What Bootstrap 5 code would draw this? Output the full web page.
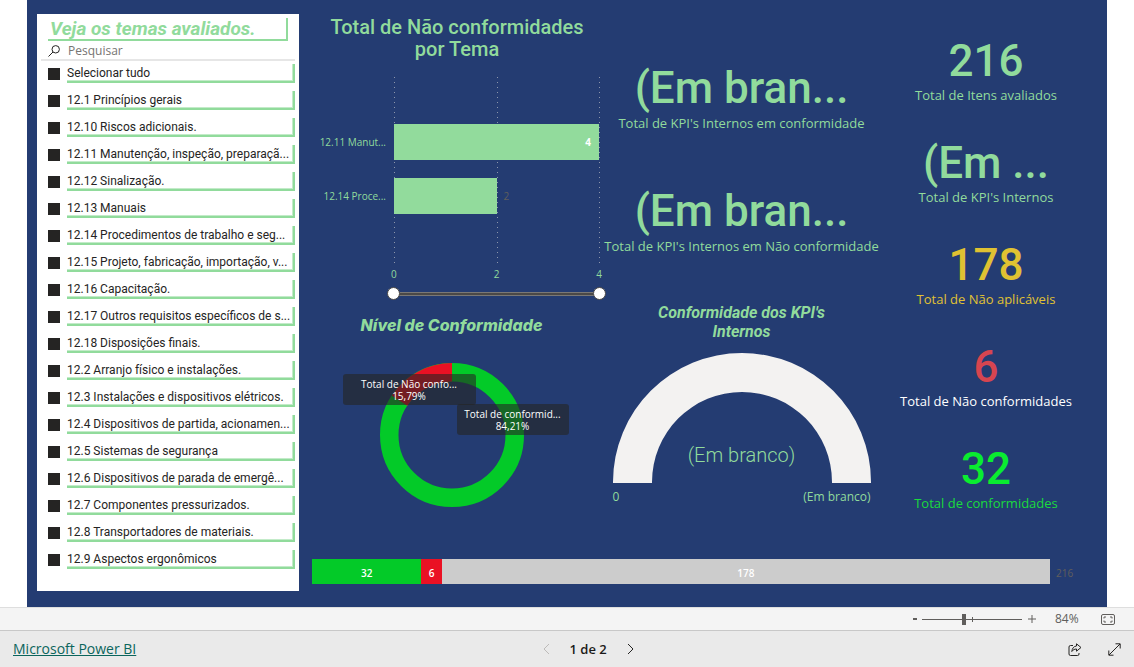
<!DOCTYPE html>
<html lang="pt-BR">
<head>
<meta charset="utf-8">
<meta name="viewport" content="width=device-width, initial-scale=1">
<title>Total de Não conformidades</title>
<link href="https://cdn.jsdelivr.net/npm/bootstrap@5.3.0/dist/css/bootstrap.min.css" rel="stylesheet">
<style>
:root{--mint:#91db9c;--navy:#243c72;--ok:#03ca28;--bad:#ea1124}
body{font-family:"Open Sans","Noto Sans",sans-serif;font-size:12px;line-height:20px;color:#252423;background:#fff}
.din{font-family:Roboto,"Liberation Sans",sans-serif;font-weight:500}
.text-mint{color:var(--mint)}
.report{background:var(--navy);margin:0 27px;padding:14px 0 16px 10px}
/* slicer */
.slicer{width:262px;padding:4px 4px 21px}
.slicer-title{font-size:19px;line-height:21px;font-style:italic;font-weight:700;color:var(--mint);margin:0 7px 0 7px;padding-left:2px;border:solid var(--mint);border-width:0 2px 2px 0;height:23px}
.search{height:20px;border-bottom:2px solid #e6e6e6;margin-bottom:3px;padding:2px 0 0 7px}
.search input{font-size:12px;line-height:16px;color:#605e5c;outline:0}
.search input::placeholder{color:#767472;opacity:1}
.opts{display:grid;grid-template-columns:minmax(0,1fr);gap:8px;padding-left:7px}
.opt{height:19px}
.opt input{appearance:none;width:12px;height:12px;background:#252423;margin:0 7px 0 0;flex:none}
.opt label{font-family:Roboto,"Open Sans",sans-serif;font-size:12px;height:19px;line-height:18px;border:solid var(--mint);border-width:0 2px 2px 0;box-shadow:inset -1px -1px #c3ebc9;white-space:nowrap;overflow:hidden}
/* visuals */
.board{display:grid;grid-template-columns:305fr 275fr 214fr;padding-right:14px}
.chart-title{font-size:20px;line-height:22px;padding:2px 0 0 11px;margin:0 0 17px}
.plot{height:189px;margin:0 5px 0 95px;padding-top:47px;position:relative}
.gridline{position:absolute;top:0;bottom:0;width:1px;background:repeating-linear-gradient(#8d96ac 0 1px,transparent 1px 5px)}
.bar-row{height:36px;margin-bottom:18px;position:relative}
.bar-name{position:absolute;right:100%;margin-right:8px;font-size:10px;white-space:nowrap;color:var(--mint)}
.bar-fill{height:36px;background:#92db9c;font-size:10px;position:relative}
.bar-out{font-size:10px;color:#605e5c;margin-left:7px}
.axis{margin:0 2px 0 92px;font-size:10px;line-height:16px;color:var(--mint)}
.span-slider{position:relative;height:13px;margin:5px -2px 15px 88px}
.span-slider::before{content:"";position:absolute;left:10px;right:10px;top:5px;height:4px;background:#4b4947;border:solid #7a7876;border-width:1px 0}
.span-slider input{position:absolute;inset:0;width:100%;height:13px;margin:0;appearance:none;background:none;pointer-events:none}
.span-slider input::-webkit-slider-thumb{appearance:none;width:13px;height:13px;border-radius:50%;background:#fff;border:1px solid #4b4947;pointer-events:auto}
.donut-title{font-family:Inter,"Liberation Sans",sans-serif;font-weight:800;font-style:italic;font-size:16px;line-height:20px;margin:0 0 28px}
.donut{width:144px;position:relative}
.tag{position:absolute;background:rgba(37,36,35,.6);border-radius:3px;color:#fff;font-size:10px;line-height:12px;text-align:center;padding:4px 0;white-space:nowrap}
.tag-bad{left:-37px;top:11px;width:133px;height:31px}
.tag-ok{left:77px;top:41px;width:112px;height:31px}
.kpi-mid{padding-top:50px}
.kpi-mid .kpi{margin-bottom:53px}
.kpi-mid .kpi + .kpi{margin-bottom:46px}
.kpi-side{padding-top:23px;display:grid;gap:32px;align-content:start}
.kpi{text-align:center;height:70px;white-space:nowrap}
.kpi-value{font-size:44px;line-height:48px}
.kpi-label{font-size:13px;line-height:22px}
.kpi-side .kpi-label{line-height:20px}
.gauge-title{font-size:16px;line-height:19px;font-style:italic;font-weight:700;margin:0 0 12px}
.gauge{width:258px;position:relative}
.gauge-value{position:absolute;left:0;right:0;top:90px;font-size:20px;line-height:24px;text-align:center}
.amber{color:#e0c232}.rose{color:#d64550}.lime{color:#0aec30}.lime-soft{color:#1adb3d}
.stack{margin:0 31px 7px 13px;font-size:10px;line-height:28px;height:25px}
.stack-bar>span{color:#fff;text-align:center}
.stack-total{width:26px;padding-left:6px;color:#605e5c}
/* bottom bars */
.zoombar{height:23px;background:#f4f4f4;border-top:1px solid #dedede;padding-right:19px;color:#605e5c}
.plain{border:0;background:none;padding:0;color:inherit;line-height:1;display:flex}
.zoom-range{width:100px;height:12px;margin:0 6px 0 4px;appearance:none;background:linear-gradient(#605e5c,#605e5c) center/100% 1px no-repeat,linear-gradient(#605e5c,#605e5c) 50px center/1px 5px no-repeat}
.zoom-range::-webkit-slider-thumb{appearance:none;width:4px;height:11px;background:#605e5c}
.zoom-pct{width:24px;margin:0 22px 0 19px}
.footbar{height:37px;background:#eaeaea;border-top:1px solid #c8c8c8;padding:0 13px}
.brand-link{font-size:14px;color:#0b655c;text-decoration:underline}
.pager{font-size:13px;font-weight:600;color:#1b1a19}
.actions{margin-left:28px;gap:26px}
</style>
</head>
<body class="min-vh-100 d-flex flex-column">
<main class="flex-grow-1 d-flex flex-column">
<div class="report flex-grow-1 d-flex">
  <form class="slicer bg-white flex-shrink-0">
    <h2 class="slicer-title din">Veja os temas avaliados.</h2>
    <div class="search d-flex align-items-center">
      <svg width="12" height="12" viewBox="0 0 12 12" fill="none" stroke="#252423" aria-hidden="true"><circle cx="7.7" cy="4.3" r="3.7"/><path d="M5 7 .5 11.5"/></svg>
      <input type="search" class="border-0 bg-transparent p-0 ms-2 w-75" placeholder="Pesquisar" aria-label="Pesquisar">
    </div>
    <div class="opts" id="opts"></div>
  </form>

  <div class="flex-grow-1 d-flex flex-column justify-content-between">
    <div class="board">
      <section>
        <h2 class="chart-title din text-mint text-center">Total de Não conformidades<br>por Tema</h2>
        <div class="plot">
          <i class="gridline" style="left:0"></i><i class="gridline" style="left:50%"></i><i class="gridline" style="left:100%"></i>
          <div class="bar-row d-flex align-items-center"><span class="bar-name">12.11 Manut...</span><div class="bar-fill d-flex align-items-center justify-content-end text-white fw-bold pe-2" style="width:100%">4</div></div>
          <div class="bar-row d-flex align-items-center"><span class="bar-name">12.14 Proce...</span><div class="bar-fill" style="width:50%"></div><span class="bar-out">2</span></div>
        </div>
        <div class="axis d-flex justify-content-between"><span>0</span><span>2</span><span>4</span></div>
        <div class="span-slider">
          <input type="range" min="0" max="4" value="0" aria-label="Mínimo">
          <input type="range" min="0" max="4" value="4" aria-label="Máximo">
        </div>
        <h2 class="donut-title text-mint text-center">Nível de Conformidade</h2>
        <div class="donut mx-auto">
          <svg class="d-block" width="144" height="144" viewBox="0 0 144 144" fill="none" stroke-width="18.5" role="img" aria-label="Nível de Conformidade">
            <circle cx="72" cy="72" r="62.75" stroke="#03ca28"/>
            <circle cx="72" cy="72" r="62.75" stroke="#ea1124" pathLength="100" stroke-dasharray="15.79 84.21" transform="rotate(-146.84 72 72)"/>
          </svg>
          <div class="tag tag-bad">Total de Não confo...<br>15,79%</div>
          <div class="tag tag-ok">Total de conformid...<br>84,21%</div>
        </div>
      </section>

      <section class="kpi-mid">
        <div class="kpi text-mint"><div class="kpi-value din">(Em bran...</div><div class="kpi-label">Total de KPI's Internos em conformidade</div></div>
        <div class="kpi text-mint"><div class="kpi-value din">(Em bran...</div><div class="kpi-label">Total de KPI's Internos em Não conformidade</div></div>
        <h2 class="gauge-title din text-mint text-center">Conformidade dos KPI's<br>Internos</h2>
        <div class="gauge mx-auto text-mint">
          <svg class="d-block" width="258" height="130" viewBox="0 0 258 130" role="img" aria-label="Conformidade dos KPI's Internos"><path d="M0 130V129A129 129 0 0 1 258 129V130H219V129A90 90 0 0 0 39 129V130Z" fill="#f3f2f1"/></svg>
          <div class="gauge-value din fw-light">(Em branco)</div>
          <div class="d-flex justify-content-between pt-1"><span>0</span><span>(Em branco)</span></div>
        </div>
      </section>

      <section class="kpi-side">
        <div class="kpi text-mint"><div class="kpi-value din">216</div><div class="kpi-label">Total de Itens avaliados</div></div>
        <div class="kpi text-mint"><div class="kpi-value din">(Em ...</div><div class="kpi-label">Total de KPI's Internos</div></div>
        <div class="kpi amber"><div class="kpi-value din">178</div><div class="kpi-label">Total de Não aplicáveis</div></div>
        <div class="kpi"><div class="kpi-value din rose">6</div><div class="kpi-label text-white">Total de Não conformidades</div></div>
        <div class="kpi"><div class="kpi-value din lime">32</div><div class="kpi-label lime-soft">Total de conformidades</div></div>
      </section>
    </div>

    <div class="stack d-flex">
      <div class="stack-bar d-flex flex-grow-1 fw-semibold">
        <span style="width:14.81%;background:#03ca28">32</span><span style="width:2.78%;background:#ea1124">6</span><span style="width:82.41%;background:#ccc">178</span>
      </div>
      <span class="stack-total">216</span>
    </div>
  </div>
</div>
</main>

<div class="zoombar d-flex align-items-center justify-content-end">
  <button class="plain" aria-label="Reduzir"><svg width="5" height="12" viewBox="0 0 5 12"><path d="M0 5h4v2H0z" fill="#605e5c"/></svg></button>
  <input class="zoom-range" type="range" min="0" max="100" value="42" aria-label="Zoom">
  <button class="plain" aria-label="Ampliar"><svg width="8" height="8" viewBox="0 0 8 8" stroke="#605e5c"><path d="M4 0v8M0 4h8"/></svg></button>
  <span class="zoom-pct">84%</span>
  <button class="plain" aria-label="Ajustar à página"><svg width="14" height="11" viewBox="0 0 14 11" fill="none" stroke="#605e5c"><rect x=".5" y=".5" width="13" height="10" rx="1.5"/><path d="M5 3H3v1.500M3 6.500V8h2M9 3h2v1.500M11 6.500V8H9"/></svg></button>
</div>

<footer class="footbar d-flex align-items-center">
  <a class="brand-link" href="#">Microsoft Power BI</a>
  <nav class="pager d-flex align-items-center mx-auto" aria-label="Páginas">
    <button class="plain" aria-label="Anterior" disabled><svg width="7" height="12" viewBox="0 0 7 12" fill="none" stroke="#bdbbb9"><path d="M6 1 1 6l5 5"/></svg></button>
    <span class="mx-3 px-1">1 de 2</span>
    <button class="plain" aria-label="Próxima"><svg width="7" height="12" viewBox="0 0 7 12" fill="none" stroke="#252423"><path d="m1 1 5 5-5 5"/></svg></button>
  </nav>
  <div class="actions d-flex align-items-center">
    <button class="plain" aria-label="Compartilhar"><svg width="14" height="13" viewBox="0 0 14 13" fill="none" stroke="#252423" stroke-linejoin="round"><path d="M5 2.500H2.500A1.500 1.500 0 0 0 1 4v7a1.500 1.500 0 0 0 1.500 1.500h7A1.500 1.500 0 0 0 11 11v-1"/><path d="M8.500.8 13 4.500 8.500 8.200V6C6.500 6 5 6.800 3.800 8.500 4.200 5.500 5.500 3.300 8.500 3z"/></svg></button>
    <button class="plain" aria-label="Tela cheia"><svg width="13" height="13" viewBox="0 0 13 13" fill="none" stroke="#252423"><path d="M1 12 12 1M7.500.8h4.700v4.700M.8 7.500v4.700h4.700"/></svg></button>
  </div>
</footer>
<script src="https://cdn.jsdelivr.net/npm/bootstrap@5.3.0/dist/js/bootstrap.bundle.min.js"></script>
<script>
const temas=["Selecionar tudo","12.1 Princípios gerais","12.10 Riscos adicionais.","12.11 Manutenção, inspeção, preparaçã...","12.12 Sinalização.","12.13 Manuais","12.14 Procedimentos de trabalho e seg...","12.15 Projeto, fabricação, importação, v...","12.16 Capacitação.","12.17 Outros requisitos específicos de s...","12.18 Disposições finais.","12.2 Arranjo físico e instalações.","12.3 Instalações e dispositivos elétricos.","12.4 Dispositivos de partida, acionamen...","12.5 Sistemas de segurança","12.6 Dispositivos de parada de emergê...","12.7 Componentes pressurizados.","12.8 Transportadores de materiais.","12.9 Aspectos ergonômicos"];
document.getElementById("opts").innerHTML=temas.map((t,i)=>`<div class="opt d-flex align-items-center"><input type="checkbox" id="t${i}" checked><label class="flex-grow-1" for="t${i}">${t}</label></div>`).join("");
</script>
</body>
</html>
